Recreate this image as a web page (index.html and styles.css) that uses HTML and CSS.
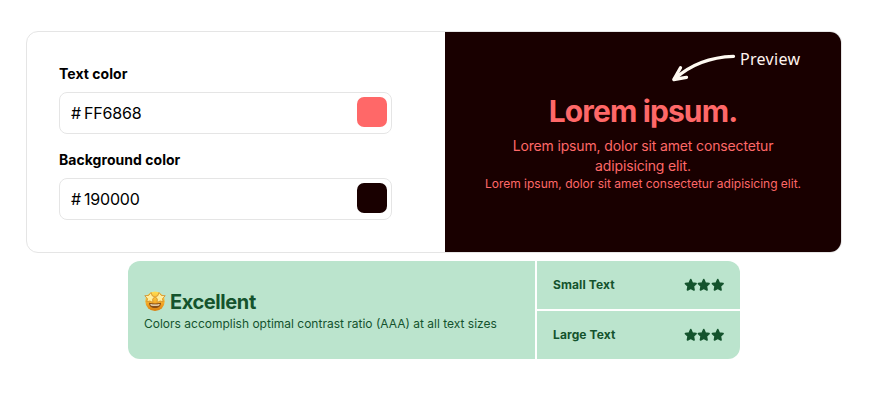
FILE: index.html
```html
<!DOCTYPE html>
<html lang="en">
<head>
<meta charset="utf-8">
<title>Color contrast checker</title>
<link rel="stylesheet" href="styles.css">
</head>
<body>
<svg class="defs" aria-hidden="true">
  <symbol id="star" viewBox="0 0 14 14"><path d="M7 1.400 8.600 4.900l3.900.6-2.800 2.700.7 3.900L7 10.300l-3.400 1.800.7-3.900-2.800-2.700 3.900-.6Z" fill="currentColor" stroke="currentColor" stroke-width="1.700" stroke-linejoin="round"/></symbol>
</svg>
<main>
  <section class="card">
    <form class="controls">
      <div class="field">
        <span class="label">Text color</span>
        <div class="input"><span class="hash">#</span><span class="value">FF6868</span><span class="swatch swatch-text"></span></div>
      </div>
      <div class="field">
        <span class="label">Background color</span>
        <div class="input"><span class="hash">#</span><span class="value">190000</span><span class="swatch swatch-bg"></span></div>
      </div>
    </form>
    <div class="preview">
      <div class="note">
        <svg width="66" height="32" viewBox="0 0 66 32" fill="none" stroke="#fffaf2" stroke-linecap="round" stroke-linejoin="round"><path d="M62.500 4.300C41 5 20 12 3.500 27" stroke-width="3.300"/><path d="M9.500 15.800 2.800 27.500 15.500 25.300" stroke-width="3.300"/></svg>
        <span>Preview</span>
      </div>
      <h1>Lorem ipsum.</h1>
      <p class="medium">Lorem ipsum, dolor sit amet consectetur adipisicing elit.</p>
      <p class="small">Lorem ipsum, dolor sit amet consectetur adipisicing elit.</p>
    </div>
  </section>
  <section class="result">
    <div class="summary">
      <h2>
        <svg class="face" viewBox="0 0 22 22">
          <defs><linearGradient id="skin" x1="0" y1="0" x2="0" y2="1"><stop offset="0" stop-color="#ffdc50"/><stop offset=".55" stop-color="#f6ae2b"/><stop offset="1" stop-color="#d97d10"/></linearGradient></defs>
          <circle cx="11" cy="11.300" r="9.700" fill="url(#skin)"/>
          <path d="m7 2.500 1.200 3.300 2.500 1-2 2.300.1 3.300-3-1.400-3 .8.700-3L.8 5.700l3.900-.3Z" fill="#ffefa0" stroke="#d08a25" stroke-width=".8" stroke-linejoin="round"/>
          <path d="m15 2.500-1.200 3.300-2.500 1 2 2.300-.1 3.300 3-1.400 3 .8-.7-3 2.700-3.100-3.900-.3Z" fill="#ffefa0" stroke="#d08a25" stroke-width=".8" stroke-linejoin="round"/>
          <path d="M5 12.700q6 1.600 12 0c0 3.400-2.400 5.400-6 5.400s-6-2-6-5.400Z" fill="#874d17"/>
          <path d="M6.200 13.900q4.800 1 9.600 0l-.7 1.500q-4.100.8-8.200 0Z" fill="#fff5d8"/>
        </svg>
        <span>Excellent</span>
      </h2>
      <p>Colors accomplish optimal contrast ratio (AAA) at all text sizes</p>
    </div>
    <div class="ratings">
      <div class="rating"><span>Small Text</span><span class="stars"><svg><use href="#star"/></svg><svg><use href="#star"/></svg><svg><use href="#star"/></svg></span></div>
      <div class="rating"><span>Large Text</span><span class="stars"><svg><use href="#star"/></svg><svg><use href="#star"/></svg><svg><use href="#star"/></svg></span></div>
    </div>
  </section>
</main>
</body>
</html>
```

FILE: styles.css
```css
* { box-sizing: border-box; }
body { margin: 0; background: #fff; font-family: Inter, "Liberation Sans", sans-serif; color: #000; }
h1, h2, p { margin: 0; }
.defs { position: absolute; width: 0; height: 0; }
main { width: 816px; margin: 31px 0 0 26px; }
.card { display: flex; height: 222px; border: 1px solid #e5e5e5; border-radius: 12px; overflow: hidden; }
.controls { width: 418px; padding: 32px; display: flex; flex-direction: column; gap: 16px; }
.field { width: 333px; }
.label { display: block; font-size: 14px; line-height: 20px; font-weight: 700; letter-spacing: 0.04px; margin-bottom: 8px; }
.input { display: flex; align-items: center; height: 42px; border: 1px solid #e5e5e5; border-radius: 8px; padding: 0 4px 0 11px; font-size: 16px; line-height: 24px; }
.hash { width: 13px; }
.value { flex: 1; letter-spacing: -0.2px; }
.swatch { width: 30px; height: 30px; border-radius: 7px; margin-top: -2px; }
.swatch-text { background: #ff6868; }
.swatch-bg { background: #190000; }
.preview { position: relative; flex: 1; background: #190000; color: #ff6868; padding: 61px 38px 0; text-align: center; }
.preview h1 { font-size: 30px; line-height: 36px; font-weight: 700; letter-spacing: -0.87px; }
.medium { font-size: 14px; line-height: 20px; letter-spacing: -0.15px; margin-top: 7px; }
.small { font-size: 12px; line-height: 16px; white-space: nowrap; }
.note { position: absolute; left: 226px; top: 20px; display: flex; color: #fff3ee; font-family: "Noto Sans", sans-serif; font-size: 16px; line-height: 14px; letter-spacing: 0.3px; }
.note span { margin-left: 3px; }
.result { display: flex; gap: 2px; width: 612px; height: 98px; margin: 8px 0 0 102px; border-radius: 12px; overflow: hidden; color: #14532d; }
.summary { width: 407px; background: #bbe4cd; padding: 27px 16px 0; }
.summary h2 { display: flex; align-items: center; gap: 4px; font-size: 20px; line-height: 28px; font-weight: 700; letter-spacing: -0.42px; }
.face { width: 22px; height: 22px; margin-top: -2px; }
.summary p { font-size: 12px; line-height: 16px; white-space: nowrap; }
.ratings { flex: 1; display: grid; grid-template-rows: 1fr 1fr; gap: 2px; }
.rating { display: flex; justify-content: space-between; align-items: center; padding: 0 16px; background: #bbe4cd; font-size: 12px; line-height: 16px; font-weight: 700; letter-spacing: 0.1px; }
.stars { display: flex; }
.stars svg { width: 13.500px; height: 14px; }
```
